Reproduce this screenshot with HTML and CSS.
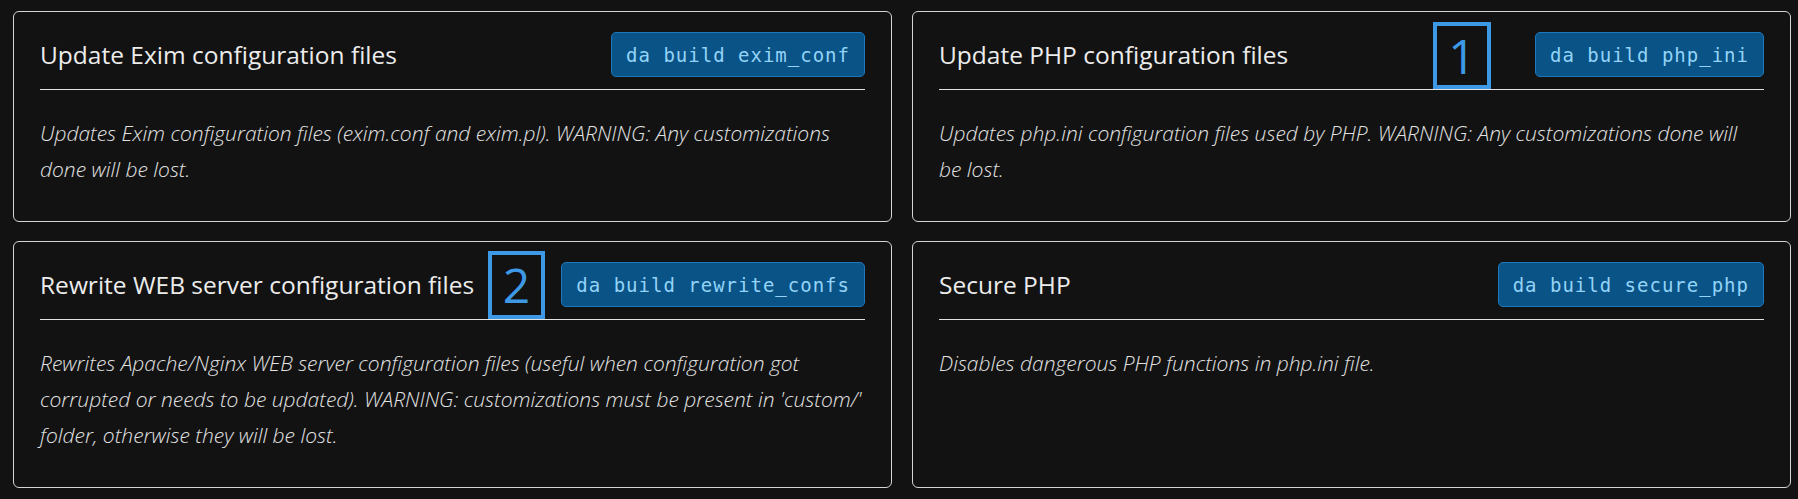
FILE: index.html
```html
<!DOCTYPE html>
<html lang="en">
<head>
<meta charset="utf-8">
<title>Build actions</title>
<link rel="stylesheet" href="styles.css">
</head>
<body>
<div class="grid">
  <section class="card">
    <div class="card-head">
      <h3 class="title">Update Exim configuration files</h3>
      <span class="cmd">da build exim_conf</span>
    </div>
    <p class="desc">Updates Exim configuration files (exim.conf and exim.pl). WARNING: Any customizations done will be lost.</p>
  </section>
  <section class="card">
    <div class="card-head">
      <h3 class="title">Update PHP configuration files</h3>
      <span class="cmd">da build php_ini</span>
    </div>
    <p class="desc">Updates php.ini configuration files used by PHP. WARNING: Any customizations done will be lost.</p>
    <span class="mark mark-1">1</span>
  </section>
  <section class="card">
    <div class="card-head">
      <h3 class="title">Rewrite WEB server configuration files</h3>
      <span class="cmd">da build rewrite_confs</span>
    </div>
    <p class="desc">Rewrites Apache/Nginx WEB server configuration files (useful when configuration got corrupted or needs to be updated). WARNING: customizations must be present in 'custom/' folder, otherwise they will be lost.</p>
    <span class="mark mark-2">2</span>
  </section>
  <section class="card">
    <div class="card-head">
      <h3 class="title">Secure PHP</h3>
      <span class="cmd">da build secure_php</span>
    </div>
    <p class="desc">Disables dangerous PHP functions in php.ini file.</p>
  </section>
</div>
</body>
</html>
```

FILE: styles.css
```css
html, body {
  margin: 0;
  background: #121212;
}

body {
  font-family: "Open Sans", "Noto Sans", sans-serif;
  color: #e6e6e6;
}

.grid {
  display: grid;
  grid-template-columns: 1fr 1fr;
  column-gap: 20px;
  row-gap: 19px;
  padding: 11px 7px 0 13px;
}

.card {
  position: relative;
  border: 1px solid #d4d4d4;
  border-radius: 6px;
  padding: 20px 26px 20px 26px;
  background: #121212;
}

.card-head {
  display: flex;
  align-items: center;
  justify-content: space-between;
  gap: 20px;
  padding-bottom: 12px;
  border-bottom: 1px solid #e2e2e2;
}

.title {
  margin: 0;
  font-size: 24.5px;
  font-weight: 400;
  color: #ececec;
}

.cmd {
  display: flex;
  align-items: center;
  height: 45px;
  box-sizing: border-box;
  padding: 0 14px 0 14px;
  background: #0a5386;
  border: 1px solid #1e78bd;
  border-radius: 5px;
  color: #93d3f8;
  font-family: "DejaVu Sans Mono", "Liberation Mono", monospace;
  font-size: 19px;
  letter-spacing: 1px;
  white-space: nowrap;
}

.desc {
  margin: 25px 0 14px 0;
  font-size: 21px;
  font-style: italic;
  font-weight: 300;
  line-height: 36px;
  color: #e2e2e2;
}

.mark {
  position: absolute;
  box-sizing: border-box;
  display: flex;
  align-items: center;
  justify-content: center;
  border: 4px solid #3d99e6;
  color: #3d99e6;
  font-family: "Open Sans", "Noto Sans", sans-serif;
  font-size: 48px;
  font-weight: 400;
  line-height: 1;
}

.mark-1 {
  left: 520px;
  top: 10px;
  width: 58px;
  height: 67px;
}

.mark-2 {
  left: 474px;
  top: 9px;
  width: 57px;
  height: 68px;
}
```
